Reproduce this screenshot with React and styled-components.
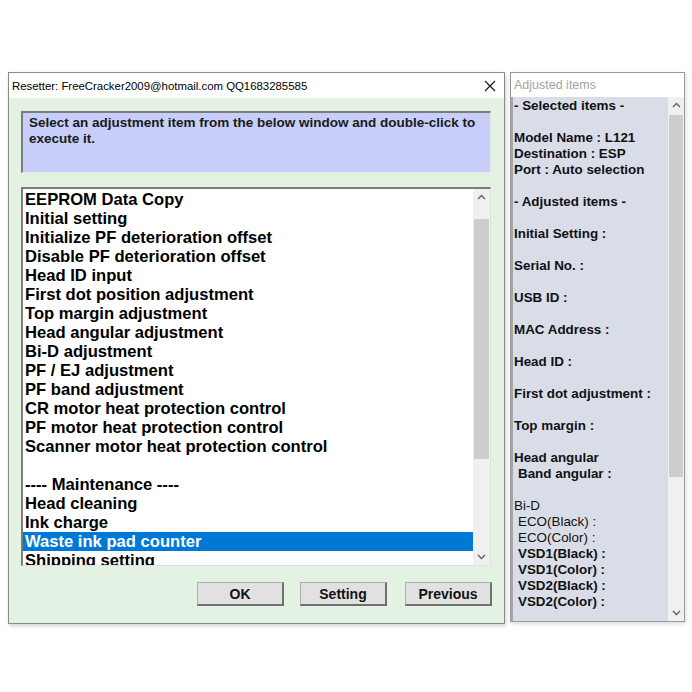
import React from "react";
import styled, { createGlobalStyle } from "styled-components";

const GlobalStyle = createGlobalStyle`
    html, body {
        margin: 0;
        padding: 0;
        background: #ffffff;
        font-family: "Liberation Sans", Arial, sans-serif;
    }
`;

const Page = styled("div")`
    width: 692px;
    height: 692px;
    display: flex;
    align-items: flex-start;
    gap: 5px;
    padding: 72px 0 0 8px;
    box-sizing: border-box;
`;

const Window = styled("div")`
    width: 497px;
    height: 552px;
    border: 1px solid #8a8a8a;
    box-sizing: border-box;
    display: flex;
    flex-direction: column;
    box-shadow: 1px 2px 4px rgba(0,0,0,0.18);
    background: #e3f2e3;
`;

const TitleBar = styled("div")`
    height: 25px;
    background: #ffffff;
    display: flex;
    align-items: center;
    justify-content: space-between;
    padding: 0 8px 0 3px;
    font-size: 11.4px;
    color: #000;
    flex-shrink: 0;
`;

const Body = styled("div")`
    flex: 1;
    display: flex;
    flex-direction: column;
    padding: 13px 13px 0 12px;
`;

const Instruction = styled("div")`
    height: 62px;
    box-sizing: border-box;
    background: #c7cefa;
    border-top: 2px solid #7c7c7c;
    border-left: 2px solid #7c7c7c;
    border-right: 1px solid #e8e8e8;
    border-bottom: 1px solid #e8e8e8;
    padding: 2px 6px 0 6px;
    font-weight: bold;
    font-size: 13.5px;
    line-height: 16px;
    color: #1a1a1a;
`;

const ListBox = styled("div")`
    margin-top: 14px;
    height: 379px;
    box-sizing: border-box;
    background: #ffffff;
    border-top: 2px solid #7c7c7c;
    border-left: 2px solid #7c7c7c;
    border-right: 1px solid #e0e0e0;
    border-bottom: 1px solid #e0e0e0;
    display: flex;
`;

const ListItems = styled("div")`
    flex: 1;
    overflow: hidden;
    padding-top: 1px;
`;

const Item = styled("div")`
    height: 19px;
    line-height: 19px;
    padding-left: 2px;
    font-weight: bold;
    font-size: 16.6px;
    white-space: nowrap;
    color: ${(p) => (p.$selected ? "#ffffff" : "#000000")};
    background: ${(p) => (p.$selected ? "#0078d7" : "transparent")};
`;

const Scrollbar = styled("div")`
    width: ${(p) => p.$width || 17}px;
    background: #f0f0f0;
    display: flex;
    flex-direction: column;
    flex-shrink: 0;
`;

const ArrowBox = styled("div")`
    height: ${(p) => p.$h || 17}px;
    display: flex;
    align-items: ${(p) => (p.$down ? "flex-end" : "flex-start")};
    justify-content: center;
    padding: 5px 0;
    box-sizing: border-box;
    flex-shrink: 0;
`;

const Track = styled("div")`
    flex: 1;
    display: flex;
    flex-direction: column;
`;

const Thumb = styled("div")`
    height: ${(p) => p.$h}px;
    margin: 0 1px;
    background: #cdcdcd;
`;

const ButtonRow = styled("div")`
    display: flex;
    justify-content: flex-end;
    margin-top: 16px;
    margin-right: -1px;
    gap: 16px;
`;

const Button = styled("button")`
    width: ${(p) => p.$w}px;
    height: 24px;
    margin-left: ${(p) => p.$ml || 0}px;
    background: #e1e1e1;
    border: 1px solid #adadad;
    border-right: 2px solid #6f6f6f;
    border-bottom: 2px solid #6f6f6f;
    font-family: "Liberation Sans", Arial, sans-serif;
    font-weight: bold;
    font-size: 14px;
    color: #111;
    padding: 0;
`;

const SidePanel = styled("div")`
    width: 175px;
    height: 550px;
    border: 1px solid #9a9a9a;
    box-sizing: border-box;
    display: flex;
    flex-direction: column;
    box-shadow: 1px 2px 4px rgba(0,0,0,0.15);
`;

const SideTitle = styled("div")`
    height: 24px;
    background: #ffffff;
    color: #a3a3a3;
    font-size: 12.5px;
    line-height: 24px;
    padding-left: 3px;
    flex-shrink: 0;
`;

const SideBody = styled("div")`
    flex: 1;
    display: flex;
    background: #d9dde8;
    border-left: 2px solid #a6a6a6;
    overflow: hidden;
`;

const SideText = styled("div")`
    flex: 1;
    padding: 1px 0 0 1px;
    overflow: hidden;
`;

const SideLine = styled("div")`
    height: 16px;
    line-height: 16px;
    font-size: 13.4px;
    font-weight: ${(p) => (p.$light ? "normal" : "bold")};
    padding-left: ${(p) => p.$indent || 0}px;
    white-space: nowrap;
    color: #111;
`;

const Chevron = ({ down }) => (
    <svg width="9" height="6" viewBox="0 0 9 6">
        <path
            d={down ? "M1 1 L4.5 4.5 L8 1" : "M1 5 L4.5 1.5 L8 5"}
            fill="none"
            stroke="#606060"
            strokeWidth="1.4"
        />
    </svg>
);

const CloseIcon = () => (
    <svg width="12" height="12" viewBox="0 0 12 12">
        <path d="M1 1 L11 11 M11 1 L1 11" stroke="#111" strokeWidth="1.1" fill="none" />
    </svg>
);

const items = [
    "EEPROM Data Copy",
    "Initial setting",
    "Initialize PF deterioration offset",
    "Disable PF deterioration offset",
    "Head ID input",
    "First dot position adjustment",
    "Top margin adjustment",
    "Head angular adjustment",
    "Bi-D adjustment",
    "PF / EJ adjustment",
    "PF band adjustment",
    "CR motor heat protection control",
    "PF motor heat protection control",
    "Scanner motor heat protection control",
    "",
    "---- Maintenance ----",
    "Head cleaning",
    "Ink charge",
    "Waste ink pad counter",
    "Shipping setting",
];

const sideLines = [
    { t: "- Selected items -" },
    { t: "" },
    { t: "Model Name : L121" },
    { t: "Destination : ESP" },
    { t: "Port : Auto selection" },
    { t: "" },
    { t: "- Adjusted items -" },
    { t: "" },
    { t: "Initial Setting :" },
    { t: "" },
    { t: "Serial No. :" },
    { t: "" },
    { t: "USB ID :" },
    { t: "" },
    { t: "MAC Address :" },
    { t: "" },
    { t: "Head ID :" },
    { t: "" },
    { t: "First dot adjustment :" },
    { t: "" },
    { t: "Top margin :" },
    { t: "" },
    { t: "Head angular" },
    { t: "Band angular :", i: 4 },
    { t: "" },
    { t: "Bi-D", light: true },
    { t: "ECO(Black)  :", i: 4, light: true },
    { t: "ECO(Color)  :", i: 4, light: true },
    { t: "VSD1(Black) :", i: 4 },
    { t: "VSD1(Color) :", i: 4 },
    { t: "VSD2(Black) :", i: 4 },
    { t: "VSD2(Color) :", i: 4 },
];

const App = () => {
    return (
        <>
            <GlobalStyle />
            <Page>
                <Window>
                    <TitleBar>
                        <span>Resetter: FreeCracker2009@hotmail.com QQ1683285585</span>
                        <CloseIcon />
                    </TitleBar>
                    <Body>
                        <Instruction>
                            Select an adjustment item from the below window and double-click to execute it.
                        </Instruction>
                        <ListBox>
                            <ListItems>
                                {items.map((it, i) => (
                                    <Item key={i} $selected={it === "Waste ink pad counter"}>
                                        {it || "\u00a0"}
                                    </Item>
                                ))}
                            </ListItems>
                            <Scrollbar>
                                <ArrowBox $h={30}>
                                    <Chevron />
                                </ArrowBox>
                                <Track>
                                    <Thumb $h={240} />
                                </Track>
                                <ArrowBox $h={20} $down>
                                    <Chevron down />
                                </ArrowBox>
                            </Scrollbar>
                        </ListBox>
                        <ButtonRow>
                            <Button $w={87}>OK</Button>
                            <Button $w={87}>Setting</Button>
                            <Button $w={87} $ml={2}>Previous</Button>
                        </ButtonRow>
                    </Body>
                </Window>
                <SidePanel>
                    <SideTitle>Adjusted items</SideTitle>
                    <SideBody>
                        <SideText>
                            {sideLines.map((l, i) => (
                                <SideLine key={i} $indent={l.i} $light={l.light}>
                                    {l.t || "\u00a0"}
                                </SideLine>
                            ))}
                        </SideText>
                        <Scrollbar $width={16}>
                            <ArrowBox $h={18}>
                                <Chevron />
                            </ArrowBox>
                            <Track>
                                <Thumb $h={362} />
                            </Track>
                            <ArrowBox $h={20} $down>
                                <Chevron down />
                            </ArrowBox>
                        </Scrollbar>
                    </SideBody>
                </SidePanel>
            </Page>
        </>
    );
};

export default App;
